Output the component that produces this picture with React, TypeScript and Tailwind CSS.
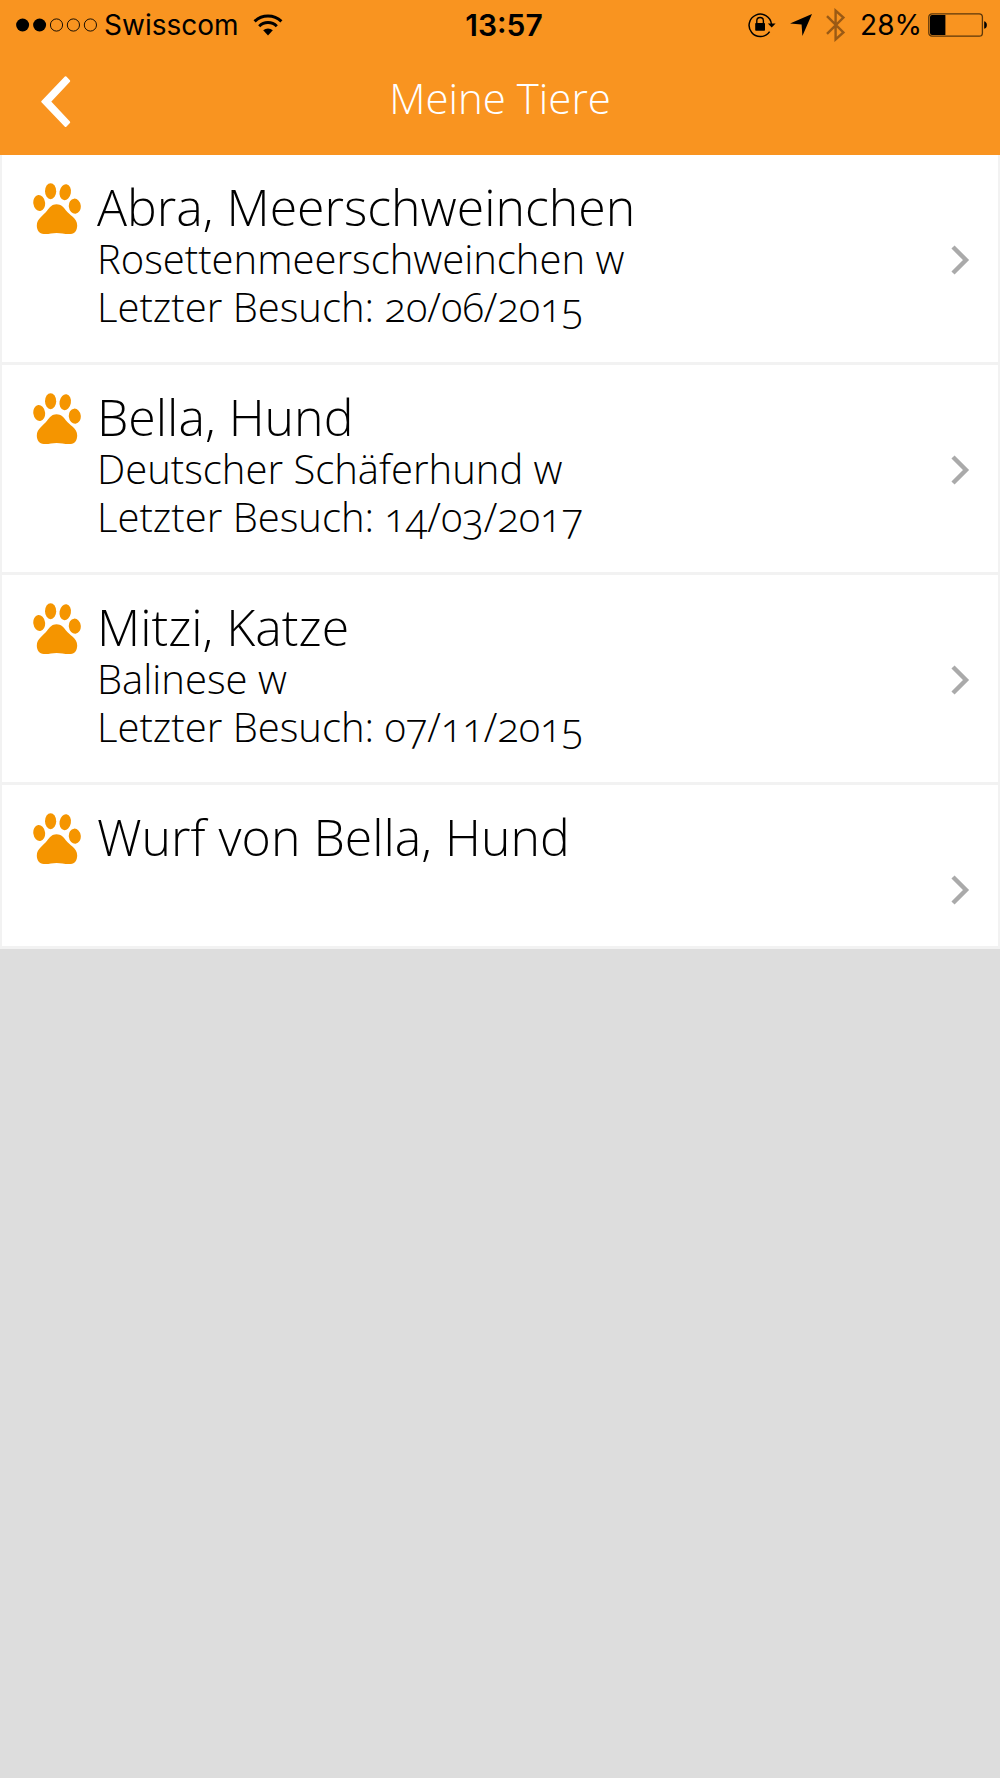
type Animal = {
  name: string
  breed?: string
  lastVisit?: string
}

const animals: Animal[] = [
  { name: 'Abra, Meerschweinchen', breed: 'Rosettenmeerschweinchen w', lastVisit: '20/06/2015' },
  { name: 'Bella, Hund', breed: 'Deutscher Schäferhund w', lastVisit: '14/03/2017' },
  { name: 'Mitzi, Katze', breed: 'Balinese w', lastVisit: '07/11/2015' },
  { name: 'Wurf von Bella, Hund' },
]

function SignalDots() {
  return (
    <svg width="82" height="14" viewBox="0 0 82 14" stroke="#000" fill="none" aria-hidden="true">
      <circle cx="6.6" cy="7" r="6.5" fill="#000" stroke="none" />
      <circle cx="23.6" cy="7" r="6.5" fill="#000" stroke="none" />
      <circle cx="40.5" cy="7" r="6.1" strokeWidth="0.9" />
      <circle cx="57.4" cy="7" r="6.1" strokeWidth="0.9" />
      <circle cx="74.4" cy="7" r="6.1" strokeWidth="0.9" />
    </svg>
  )
}

function WifiIcon() {
  return (
    <svg width="30" height="22" viewBox="0 0 30 22" fill="none" stroke="#000" strokeWidth="3" aria-hidden="true">
      <path d="M1.6 7.4a19.3 19.3 0 0 1 26.8 0" />
      <path d="M6.2 12.2a12.6 12.6 0 0 1 17.6 0" />
      <path d="M10.2 16.3a7 7 0 0 1 9.6 0L15 21.4z" fill="#000" stroke="none" />
    </svg>
  )
}

function RotationLockIcon() {
  return (
    <svg width="28" height="26" viewBox="0 0 28 26" fill="none" stroke="#000" aria-hidden="true">
      <path d="M21.6 19.6A11.2 11.2 0 1 1 23.4 12" strokeWidth="1.5" />
      <path d="M19.8 11.4h7.8l-3.9 4z" fill="#000" stroke="none" />
      <rect x="7.2" y="11" width="9.8" height="7.8" rx="0.8" fill="#000" stroke="none" />
      <path d="M8.8 11.5V8.8a3.3 3.3 0 0 1 6.6 0v2.7" strokeWidth="1.4" />
    </svg>
  )
}

function LocationIcon() {
  return (
    <svg width="22" height="22" viewBox="0 0 22 22" aria-hidden="true">
      <path d="M22 0 12.4 22 11.6 10.6 0 9.6z" />
    </svg>
  )
}

function BluetoothIcon() {
  return (
    <svg width="20" height="34" viewBox="0 0 20 34" fill="none" stroke="#9a5a15" strokeWidth="2.4" aria-hidden="true">
      <path d="M1 8.2 17.4 24.4 9.6 31.4V2.6l7.8 7L1 25.8" />
    </svg>
  )
}

function BatteryIcon() {
  return (
    <svg width="60" height="24" viewBox="0 0 60 24" aria-hidden="true">
      <rect x="0.8" y="0.8" width="53.6" height="22.4" rx="3.2" fill="none" stroke="#5c370a" strokeWidth="1.3" />
      <path d="M4 2h13.4v20H4a2 2 0 0 1-2-2V4a2 2 0 0 1 2-2z" />
      <path d="M56.2 8.2c3.6 1 3.6 6.6 0 7.6z" />
    </svg>
  )
}

function PawIcon() {
  return (
    <svg className="shrink-0" width="48" height="52" viewBox="0 0 48 52" fill="#f59500" aria-hidden="true">
      <ellipse cx="6.2" cy="20" rx="5.9" ry="8" transform="rotate(-8 6.2 20)" />
      <ellipse cx="17.6" cy="8.2" rx="5.6" ry="8" />
      <ellipse cx="32.2" cy="9.2" rx="5.7" ry="8" transform="rotate(10 32.2 9.2)" />
      <ellipse cx="41.8" cy="23.2" rx="6" ry="7.6" transform="rotate(-6 41.8 23.2)" />
      <path d="M23.5 21.2c4.5 0 7 2.8 9.5 6.3 3 4.3 11.2 7.5 11.2 14.8 0 5-2.4 8.5-6.4 8.7-6 .4-9-1-14.2-1-5.1 0-7.5 1.3-12.8 1-4.5-.2-7-3.5-7-8.4 0-7 7.1-10.3 10.4-15 2.5-3.5 4.9-6.4 9.300-6.400z" />
    </svg>
  )
}

function StatusBar() {
  return (
    <div className="grid h-[50px] grid-cols-[1fr_auto_1fr] items-center pl-4 pr-3 text-[28px] leading-[50px] text-black font-['Inter',sans-serif]">
      <div className="flex items-center gap-[6px] font-normal">
        <SignalDots />
        <span>Swisscom</span>
        <span className="pl-2">
          <WifiIcon />
        </span>
      </div>
      <time className="pl-1 text-[30px] font-semibold">13:57</time>
      <div className="flex items-center justify-end gap-[14px] font-normal">
        <RotationLockIcon />
        <LocationIcon />
        <BluetoothIcon />
        <div className="flex items-center gap-[6px]">
          <span>28%</span>
          <BatteryIcon />
        </div>
      </div>
    </div>
  )
}

function AnimalRow({ animal }: { animal: Animal }) {
  return (
    <li className="border-b-[3px] border-[#f2f2f2]">
      <a href="#" className="flex min-h-[161px] items-start pb-[31px] pl-[31px] pr-7 pt-7">
        <PawIcon />
        <div className="ml-4 min-w-0 flex-1 oldstyle-nums">
          <h2 className="mb-[3px] text-[50px] leading-[49px]">{animal.name}</h2>
          {animal.breed && <p className="text-[40px] leading-[48px]">{animal.breed}</p>}
          {animal.lastVisit && <p className="text-[40px] leading-[48px]">Letzter Besuch: {animal.lastVisit}</p>}
        </div>
        <svg className="mt-[62px] shrink-0" width="20" height="30" viewBox="0 0 20 30" fill="none" aria-hidden="true">
          <path d="M3 2 16 15 3 28" stroke="#aaa" strokeWidth="4.4" />
        </svg>
      </a>
    </li>
  )
}

export default function App() {
  return (
    <div className="min-h-screen bg-[#ddd] font-light text-black font-['Open_Sans',sans-serif]">
      <header className="bg-[#f99420]">
        <StatusBar />
        <div className="grid h-[105px] grid-cols-[1fr_auto_1fr] items-start text-white">
          <button type="button" aria-label="Zurück" className="justify-self-start pl-10 pt-[25px]">
            <svg width="32" height="54" viewBox="0 0 32 54" fill="#fff" stroke="#fff" strokeWidth="2" strokeLinejoin="round" aria-hidden="true">
              <path d="M25.6 2.2 29.2 6 10 26.6 29.2 47.2 25.6 51 2.2 26.6z" />
            </svg>
          </button>
          <h1 className="pt-[20px] text-[42px] leading-[56px]">Meine Tiere</h1>
        </div>
      </header>
      <main>
        <ul className="border-x-2 border-[#f2f2f2] bg-white">
          {animals.map((animal) => (
            <AnimalRow key={animal.name} animal={animal} />
          ))}
        </ul>
      </main>
    </div>
  )
}
